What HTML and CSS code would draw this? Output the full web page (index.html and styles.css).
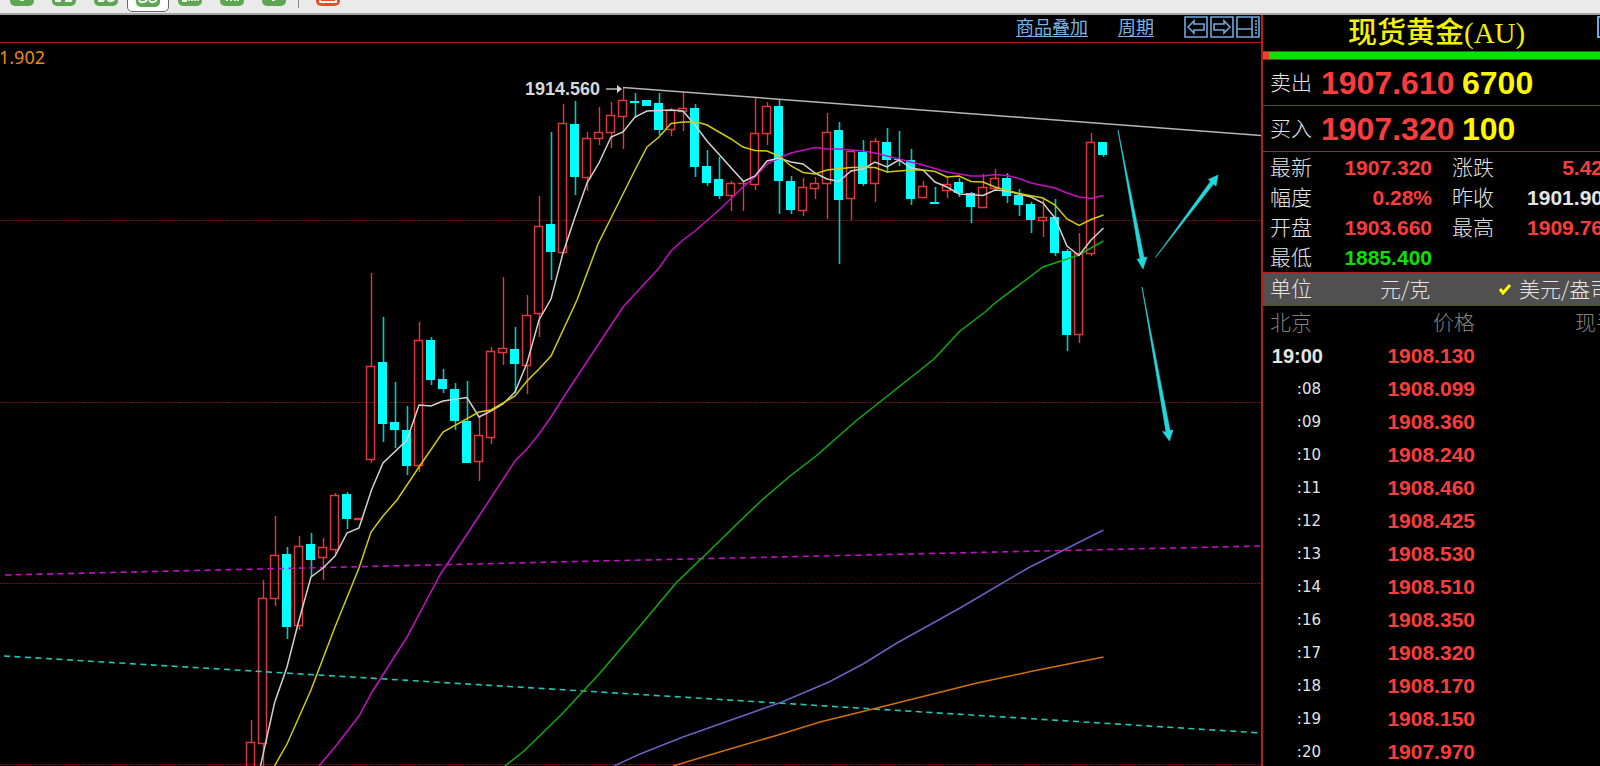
FILE: index.html
```html
<!DOCTYPE html>
<html lang="zh-CN">
<head>
<meta charset="utf-8">
<title>现货黄金(AU)</title>
<link rel="stylesheet" href="styles.css">
</head>
<body>
<header class="toolbar">
  <button class="tool" aria-label="周期 1"><svg class="tool-icon" viewBox="0 0 24 24"><rect width="24" height="24" rx="5"/><path d="M12 8v11M10 18h4"/></svg></button>
  <button class="tool" aria-label="周期 2"><svg class="tool-icon" viewBox="0 0 24 24"><rect width="24" height="24" rx="5"/><path d="M6 8v11M3 19h6M13 19h6q2-4-1-6h-4v-5h6"/></svg></button>
  <button class="tool" aria-label="周期 3"><svg class="tool-icon" viewBox="0 0 24 24"><rect width="24" height="24" rx="5"/><path d="M4 19h5q3-3 0-6q3-3-1-5h-4M17 8q-4 0-4 6t4 5q4 0 4-5t-4-6z"/></svg></button>
  <button class="tool tool-active" aria-label="周期 4" aria-pressed="true"><svg class="tool-icon" viewBox="0 0 24 24"><rect width="24" height="24" rx="5"/><path d="M10 8Q3 10 3 15t4 4q4 0 4-4t-4-3M17 8q-4 0-4 6t4 5q4 0 4-5t-4-6z"/></svg></button>
  <button class="tool" aria-label="周期 5"><svg class="tool-icon" viewBox="0 0 24 24"><rect width="24" height="24" rx="5"/><path d="M4 19h5M11 19v-6M14 19v-6M17 19v-6M20 19v-6"/></svg></button>
  <button class="tool" aria-label="周期 6"><svg class="tool-icon" viewBox="0 0 24 24"><rect width="24" height="24" rx="5"/><path d="M7 19v-8M11 19v-8M15 19v-8M18 19v-8"/></svg></button>
  <button class="tool" aria-label="周期 7"><svg class="tool-icon" viewBox="0 0 24 24"><rect width="24" height="24" rx="5"/><path d="M12 19v-9M10 18h3"/></svg></button>
  <span class="tool-divider"></span>
  <button class="tool tool-alert" aria-label="图表"><svg class="tool-icon" viewBox="0 0 24 24"><rect width="24" height="24" rx="5"/><path d="M4 20h16v-9h-16zM6 17h12"/></svg></button>
</header>
<div class="workspace">
  <main class="chart">
    <nav class="chart-nav">
      <a class="nav-link" href="#overlay">商品叠加</a>
      <a class="nav-link" href="#period">周期</a>
      <div class="nav-buttons">
        <button class="nav-button" aria-label="后退"><svg class="nav-icon" viewBox="0 0 24 22"><path d="M1 1h22v20H1zM4 11l6-6v3h10v6H10v3z"/></svg></button>
        <button class="nav-button" aria-label="前进"><svg class="nav-icon" viewBox="0 0 24 22"><path d="M1 1h22v20H1zM20 11l-6-6v3H4v6h10v3z"/></svg></button>
        <button class="nav-button" aria-label="布局"><svg class="nav-icon" viewBox="0 0 24 22"><path d="M1 1h22v20H1zM1 13h15M16 1v20"/><path stroke-dasharray="2 1" d="M20 4v15"/></svg></button>
      </div>
    </nav>
    <svg class="plot" viewBox="0 43 1262 723" preserveAspectRatio="xMinYMin slice" role="img" aria-label="K线图">
      <path class="grid" d="M0 220.5H1262M0 402.5H1262M0 583.5H1262M0 764.5H1262"/>
      <path class="down-wick" d="M287.5 547V639M311.5 533V577M347.5 492V529M383.5 317V442M395.5 382V448M407.5 406V475M431.5 337V385M443.5 369V393M455.5 383V430M467.5 381V463M515.5 327V393M551.5 132V280M575.5 101V195M635.5 93V118M659.5 93V135M695.5 104V177M707.5 150V186M719.5 157V199M779.5 99V214M791.5 176V214M839.5 122V264M863.5 140V186M887.5 128V173M899.5 131V166M911.5 149V205M935.5 187V203M959.5 178V197M971.5 192V223M1007.5 173V203M1019.5 189V216M1031.5 202V233M1055.5 199V256M1067.5 249V351M1103.5 142V157"/>
      <path class="down-body" d="M282 554h9v73h-9zM306 544h9v16h-9zM342 494h9v25h-9zM378 362h9v62h-9zM390 422h9v8h-9zM402 430h9v36h-9zM426 340h9v40h-9zM438 379h9v10h-9zM450 389h9v32h-9zM462 421h9v42h-9zM510 349h9v15h-9zM546 224h9v28h-9zM570 124h9v53h-9zM630 101h9v2h-9zM642 100h9v6h-9zM654 103h9v27h-9zM690 108h9v59h-9zM702 166h9v17h-9zM714 179h9v17h-9zM774 106h9v75h-9zM786 181h9v29h-9zM834 130h9v70h-9zM858 152h9v32h-9zM882 142h9v18h-9zM894 159h9v1h-9zM906 160h9v39h-9zM930 202h9v2h-9zM954 182h9v11h-9zM966 193h9v14h-9zM1002 178h9v18h-9zM1014 195h9v10h-9zM1026 204h9v16h-9zM1050 217h9v36h-9zM1062 251h9v84h-9zM1098 142h9v13h-9z"/>
      <path class="up" d="M251.5 720V743M263.5 580V598M263.5 743V766M275.5 516V555M275.5 599V606M299.5 536V546M299.5 626V630M323.5 538V548M323.5 557V580M335.5 493V495M335.5 550V554M371.5 273V366M371.5 460V463M419.5 322V340M419.5 466V472M479.5 417V435M479.5 462V481M491.5 347V351M491.5 437V444M503.5 277V348M503.5 353V365M527.5 295V315M527.5 365V394M539.5 196V227M539.5 314V337M563.5 104V123M587.5 132V138M587.5 177V191M599.5 107V132M599.5 139V145M611.5 102V116M611.5 133V148M623.5 88V100M623.5 116V149M671.5 108V110M671.5 130V136M683.5 92V108M683.5 111V131M731.5 181V183M731.5 196V211M743.5 182V211M755.5 98V133M755.5 185V190M767.5 102V106M767.5 134V145M803.5 178V187M803.5 211V216M815.5 177V183M815.5 188V199M827.5 113V132M827.5 184V219M851.5 199V220M875.5 138V141M875.5 184V202M923.5 181V186M947.5 177V185M947.5 191V198M983.5 174V187M995.5 169V178M995.5 188V190M1043.5 198V217M1043.5 221V237M1079.5 233V253M1079.5 335V343M1091.5 133V142M1091.5 254V256"/>
      <path class="up" d="M246.5 742.5h8v30h-8zM258.5 598.5h8v145h-8zM270.5 555.5h8v43h-8zM294.5 546.5h8v79h-8zM318.5 547.5h8v10h-8zM330.5 495.5h8v54h-8zM354 518.5h9M354 519.5h9M366.5 366.5h8v93h-8zM414.5 340.5h8v125h-8zM474.5 435.5h8v26h-8zM486.5 351.5h8v86h-8zM498.5 348.5h8v4h-8zM522.5 315.5h8v50h-8zM534.5 226.5h8v87h-8zM558.5 123.5h8v129h-8zM582.5 138.5h8v39h-8zM594.5 132.5h8v6h-8zM606.5 115.5h8v17h-8zM618.5 100.5h8v16h-8zM666.5 110.5h8v19h-8zM678.5 108.5h8v3h-8zM726.5 183.5h8v12h-8zM738 183.5h9M750.5 133.5h8v51h-8zM762.5 106.5h8v27h-8zM798.5 187.5h8v23h-8zM810.5 183.5h8v5h-8zM822.5 132.5h8v51h-8zM846.5 151.5h8v47h-8zM870.5 141.5h8v42h-8zM918.5 186.5h8v11h-8zM942.5 184.5h8v6h-8zM978.5 187.5h8v20h-8zM990.5 178.5h8v10h-8zM1038.5 217.5h8v3h-8zM1074.5 253.5h8v81h-8zM1086.5 142.5h8v111h-8z"/>
      <path class="line dashed magenta" d="M5 575L600 561L1262 546"/>
      <path class="line dashed teal" d="M4 656L600 692L1262 733"/>
      <polyline class="line green" points="505,766 524,751 562,714 600,673 640,626 676,583 701,559 740,521 762,500 790,476 816,456 857,420 895,390 934,359 960,331 985,312 995,303 1019,285 1043,267 1055,263 1079,255 1091,248 1103.5,241"/>
      <polyline class="line violet" points="614,766 640,754 683,737 731,720 782,702 829,682 863,664 897,643 960,608 1028,568 1103.5,530"/>
      <polyline class="line orange" points="673,766 723,751 778,735 820,722 873,709 977,683 1033,671 1103.5,657"/>
      <polyline class="line magenta" points="319,766 335,747 359,716 372,692 407,637 440,575 479,516 496,490 515,461 527,449 539,434 551,417 563,398 590,357 623,307 635,294 659,268 671,251 683,240 695,231 719,210 743,187 755,177 767,164 779,158 791,153 815,147.5 827,149 839,149 863,151 875,153 899,159 923,165 947,172 971,176 983,176 995,174.5 1007,175.5 1019,178.5 1031,183 1055,188 1067,193 1079,197 1091,198.5 1103.5,195.5"/>
      <polyline class="line white" points="260.5,766 274.5,703 287,667 298.5,622 311,577 323,568 335,556 347,533 359,528 371.5,490 383,463 407,440 419,405 431,406 443,401 467,397.5 479,417 491,411 503,404 515,392 527,363 539,320 551,299 563,253 575,217 587,183 599,163 611,137 623,132 635,117 647,111 671,110 683,111 695,125 707,141 743.5,181.5 755,176 767,161 779,158 791,162 803,164 815,173 827,179 839,181.5 851,171 863,169 875,162 887,167 899,160 911,168 923,170 935,182 947,187 959,194 983,195.5 995,190 1007,191 1019,194 1031,197 1043,203 1055,218 1067,246 1079,255.5 1091,240 1103.5,228"/>
      <polyline class="line yellow" points="274.5,766 287,744 311,690 335,627 359,568 371,532 383,516 397,500 419,467 443,432 479,412 491,410 515,396 527,381 539,369 551,356 577,300 598,244 635,170 647,147 659,137 671,123.5 683,122 697,122 707,125 719,132 731,139 743,147 755,150.5 767,151 779,156 791,166 803,172.5 815,174 827,170 851,167.5 875,167.5 887,172 911,170 923,170 935,171.5 947,177 959,176 971,181.5 983,182 995,187 1019,193.5 1043,198 1055,205 1067,219 1079,225.5 1091,219.5 1103.5,215"/>
      <path class="trend" d="M623 87.5L1262 135.5M606 89H617"/>
      <path class="trend-head" d="M617 85L622 89L617 93z"/>
      <path class="arrow" d="M1118 130L1140 259L1137 259L1143 269L1147 257L1144 257.500zM1142 287L1166 432L1162.500 431.500L1169.500 441L1173 430L1170 430.500zM1155.500 257.500L1213.500 184L1216 186L1218 175L1208.500 179.500L1210.500 181.500z"/>
      <text class="peak" x="525" y="95">1914.560</text>
      <text class="ma" x="-1" y="64">1.902</text>
    </svg>
  </main>
  <aside class="quote">
    <div class="quote-head">
      <h1 class="quote-title">现货黄金(AU)</h1>
      <button class="edge-button" aria-label="更多"></button>
    </div>
    <div class="ratio"></div>
    <div class="offer"><span class="offer-label">卖出</span><span class="offer-price">1907.610</span><span class="offer-size">6700</span></div>
    <div class="offer"><span class="offer-label">买入</span><span class="offer-price">1907.320</span><span class="offer-size">100</span></div>
    <dl class="stats">
      <dt>最新</dt><dd class="rise">1907.320</dd><dt>涨跌</dt><dd class="rise">5.42</dd>
      <dt>幅度</dt><dd class="rise">0.28%</dd><dt>昨收</dt><dd>1901.90</dd>
      <dt>开盘</dt><dd class="rise">1903.660</dd><dt>最高</dt><dd class="rise">1909.76</dd>
      <dt>最低</dt><dd class="fall">1885.400</dd>
    </dl>
    <div class="units" role="radiogroup" aria-label="单位">
      <span class="units-title">单位</span>
      <input class="unit-radio" type="radio" name="unit" id="unit-gram"><label class="unit-gram" for="unit-gram">元/克</label>
      <input class="unit-radio" type="radio" name="unit" id="unit-ounce" checked><svg class="check" viewBox="0 0 12 12"><path d="M1 6L4 10L11 2"/></svg><label for="unit-ounce">美元/盎司</label>
    </div>
    <table class="ticks">
      <thead><tr><th class="col-time">北京</th><th class="col-price">价格</th><th class="col-volume">现手</th></tr></thead>
      <tbody>
        <tr><td class="hour">19:00</td><td>1908.130</td><td></td></tr>
        <tr><td>:08</td><td>1908.099</td><td></td></tr>
        <tr><td>:09</td><td>1908.360</td><td></td></tr>
        <tr><td>:10</td><td>1908.240</td><td></td></tr>
        <tr><td>:11</td><td>1908.460</td><td></td></tr>
        <tr><td>:12</td><td>1908.425</td><td></td></tr>
        <tr><td>:13</td><td>1908.530</td><td></td></tr>
        <tr><td>:14</td><td>1908.510</td><td></td></tr>
        <tr><td>:16</td><td>1908.350</td><td></td></tr>
        <tr><td>:17</td><td>1908.320</td><td></td></tr>
        <tr><td>:18</td><td>1908.170</td><td></td></tr>
        <tr><td>:19</td><td>1908.150</td><td></td></tr>
        <tr><td>:20</td><td>1907.970</td><td></td></tr>
      </tbody>
    </table>
  </aside>
</div>
</body>
</html>
```
FILE: styles.css
```css
* { box-sizing: border-box; }
body {
  margin: 0;
  height: 100vh;
  display: flex;
  flex-direction: column;
  overflow: hidden;
  background: #000;
  color: #e4e4e4;
  font-family: "Liberation Sans", "Noto Sans CJK SC", sans-serif;
}
button {
  padding: 0;
  border: 0;
  background: none;
  display: flex;
}

/* toolbar */
.toolbar {
  flex: none;
  display: flex;
  align-items: flex-end;
  height: 15px;
  padding-left: 1px;
  overflow: hidden;
  background: #ebeaea;
  border-bottom: 2px solid #a5a3a3;
}
.tool {
  flex: none;
  width: 42px;
  height: 36px;
  justify-content: center;
  align-items: flex-end;
  padding-bottom: 7px;
}
.tool-active {
  background: #fff;
  border: 1px solid #666;
  border-radius: 5px;
  height: 32px;
  margin-bottom: 1px;
  padding-bottom: 4px;
}
.tool-icon { width: 24px; height: 24px; }
.tool-icon rect { fill: #5ea653; }
.tool-icon path { fill: none; stroke: #e9f6e6; stroke-width: 2; }
.tool-alert .tool-icon rect { fill: #ec4a2c; }
.tool-divider {
  flex: none;
  width: 1px;
  height: 22px;
  margin: 0 8px 5px 3px;
  background: #888;
}

/* layout */
.workspace { flex: 1; display: flex; min-height: 0; }
.chart { flex: 1; display: flex; flex-direction: column; min-width: 0; }
.chart-nav {
  flex: none;
  display: flex;
  justify-content: flex-end;
  align-items: flex-start;
  gap: 30px;
  height: 28px;
  padding: 1px 1px 0;
  border-bottom: 1px solid #b81c18;
}
.nav-link {
  color: #7ab2e6;
  font-size: 18px;
  line-height: 25px;
  text-decoration: underline;
  text-underline-offset: 2px;
}
.nav-buttons { display: flex; gap: 2px; }
.nav-icon {
  width: 24px;
  height: 22px;
  fill: none;
  stroke: #6fa8dc;
  stroke-width: 1.6;
}

/* plot */
.plot { flex: 1; display: block; width: 100%; min-height: 0; }
.plot path, .plot polyline { fill: none; }
.plot .grid { stroke: #7c0c0c; stroke-dasharray: 2 1; }
.plot .down-wick { stroke: #00c8c8; stroke-width: 1.6; }
.plot .down-body { fill: #00ffff; }
.plot .up { stroke: #e0383c; stroke-width: 1.4; }
.plot .line { stroke-width: 1.5; }
.plot .dashed { stroke-width: 1.6; stroke-dasharray: 6 4.5; }
.plot .magenta { stroke: #c410c4; }
.plot .teal { stroke: #20c8b8; }
.plot .green { stroke: #0fae0f; }
.plot .violet { stroke: #6862c0; }
.plot .orange { stroke: #cf700c; }
.plot .white { stroke: #d4d0d0; }
.plot .yellow { stroke: #d0cc08; }
.plot .trend { stroke: #b8b4b4; stroke-width: 1.5; }
.plot .trend-head { fill: #d8d8d8; }
.plot .arrow { fill: #22d8dc; stroke: #22d8dc; stroke-width: 0.6; }
.peak { fill: #d8d8d8; font-size: 18px; font-weight: bold; }
.ma { fill: #ee8a14; font-family: "Noto Sans", sans-serif; font-size: 18px; }

/* quote panel */
.quote {
  flex: none;
  width: 339px;
  border-left: 2px solid #b81c18;
  overflow: hidden;
  font-size: 21px;
}
.quote-head {
  display: flex;
  height: 36px;
  align-items: flex-start;
  justify-content: space-between;
}
.quote-title {
  margin: 0 0 0 85px;
  color: #f2f200;
  font-family: "Liberation Serif", "Noto Sans CJK SC", serif;
  font-size: 29px;
  font-weight: 500;
  line-height: 36px;
}
.edge-button {
  width: 3px;
  height: 22px;
  margin-top: 1px;
  border: 2px solid #6fa8dc;
  border-right: 0;
}
.ratio {
  height: 9px;
  border: solid #b81c18;
  border-width: 1px 0;
  background: linear-gradient(to right, #f43c30 6px, #0ce000 6px);
}
.offer {
  display: flex;
  align-items: center;
  height: 46px;
  padding-left: 7px;
  border-bottom: 1px solid #b81c18;
  line-height: 44px;
  font-weight: bold;
}
.offer-label { width: 51px; font-weight: 300; }
.offer-price { width: 141px; color: #fb3c3c; font-size: 32px; }
.offer-size { color: #fff800; font-size: 32px; }
.stats {
  display: grid;
  grid-template-columns: 62px 100px 82px 89px;
  grid-auto-rows: 30px;
  margin: 0;
  padding: 0 0 0 7px;
  line-height: 31px;
}
.stats dt { font-weight: 300; }
.stats dt:nth-of-type(even) { padding-left: 20px; }
.stats dd { margin: 0; text-align: right; font-weight: bold; }
.stats .rise { color: #fb3c3c; }
.stats .fall { color: #0ce000; }
.units {
  display: flex;
  height: 34px;
  padding-left: 7px;
  line-height: 32px;
  white-space: nowrap;
  font-weight: 300;
  background: #505050;
  border: solid #b81c18;
  border-width: 1px 0;
}
.units > * { flex: none; }
.units-title { width: 110px; }
.unit-radio { appearance: none; width: 0; height: 0; margin: 0; }
.unit-gram { width: 119px; }
.units label { font-family: "Noto Sans CJK SC", sans-serif; line-height: 30px; }
.check {
  width: 12px;
  height: 12px;
  margin: 10px 8px 0 0;
  fill: none;
  stroke: #fff800;
  stroke-width: 3;
}
.ticks {
  width: 100%;
  table-layout: fixed;
  border-collapse: collapse;
  line-height: 32px;
}
.ticks th, .ticks td { height: 33px; padding: 0; white-space: nowrap; }
.ticks th { color: #808080; font-weight: 300; }
.ticks .col-time { width: 60px; padding-left: 7px; text-align: left; }
.ticks .col-price { width: 152px; text-align: right; }
.ticks .col-volume { padding-left: 100px; text-align: left; }
.ticks td { text-align: right; color: #fb3c3c; font-weight: bold; }
.ticks td:first-child {
  padding-right: 2px;
  color: #e4e4e4;
  font-family: "DejaVu Sans", sans-serif;
  font-size: 15px;
  font-weight: normal;
}
.ticks td.hour {
  padding-right: 0;
  font-family: "Liberation Sans", sans-serif;
  font-size: 20px;
  font-weight: bold;
}
```
